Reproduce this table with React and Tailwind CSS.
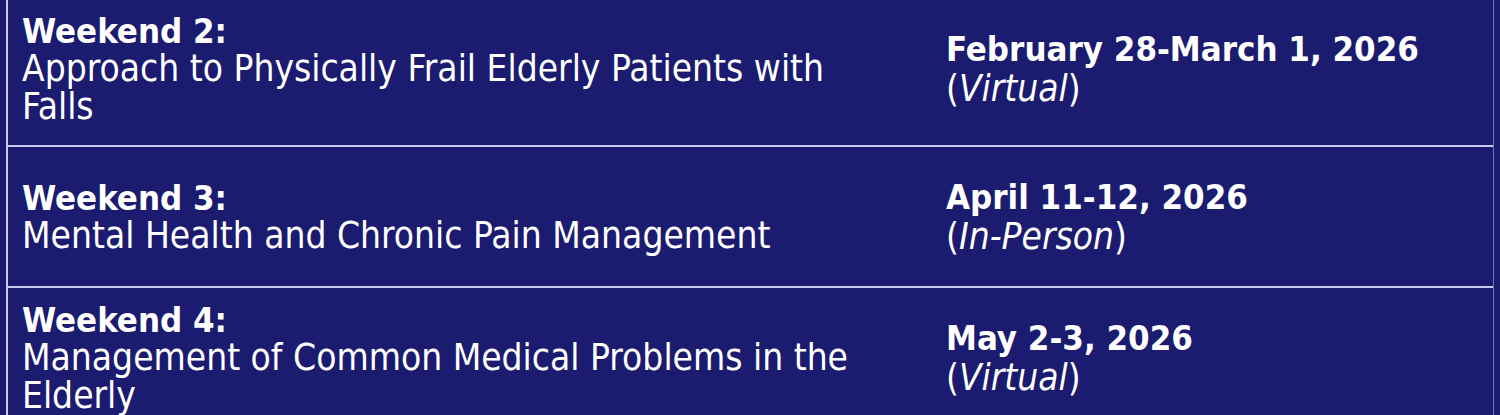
import React from "react";

const rows = [
  {
    title: "Weekend 2:",
    lines: ["Approach to Physically Frail Elderly Patients with", "Falls"],
    date: "February 28-March 1, 2026",
    mode: "Virtual",
    rowClass: "h-[145px] pb-[8px]",
  },
  {
    title: "Weekend 3:",
    lines: ["Mental Health and Chronic Pain Management"],
    date: "April 11-12, 2026",
    mode: "In-Person",
    rowClass: "h-[141px] border-t-2 border-[#c9c9ef]",
  },
  {
    title: "Weekend 4:",
    lines: ["Management of Common Medical Problems in the", "Elderly"],
    date: "May 2-3, 2026",
    mode: "Virtual",
    rowClass: "h-[141px] border-t-2 border-[#c9c9ef]",
  },
];

function Row({ row }) {
  return (
    <div className={`flex items-center ${row.rowClass}`}>
      <div className="w-[924px] shrink-0 pl-[14px] text-[36.8px] leading-[38px]">
        <div className="font-bold text-[34.5px]">{row.title}</div>
        {row.lines.map((l) => (
          <div key={l}>{l}</div>
        ))}
      </div>
      <div className="flex-1 pl-[14px] leading-[40px]">
        <div className="font-bold text-[34.5px]">{row.date}</div>
        <div className="text-[36.8px]">
          (<span className="italic">{row.mode}</span>)
        </div>
      </div>
    </div>
  );
}

export default function App() {
  return (
    <div className="h-[415px] w-[1500px] overflow-hidden bg-[#1b1b6f] text-white [font-family:'DejaVu_Sans_Condensed','DejaVu_Sans',sans-serif]">
      <div className="ml-[6px] w-[1488px] border-l-2 border-r border-l-[#c9c9ef] border-r-[#7070b0]">
        {rows.map((r) => (
          <Row key={r.title} row={r} />
        ))}
      </div>
    </div>
  );
}
